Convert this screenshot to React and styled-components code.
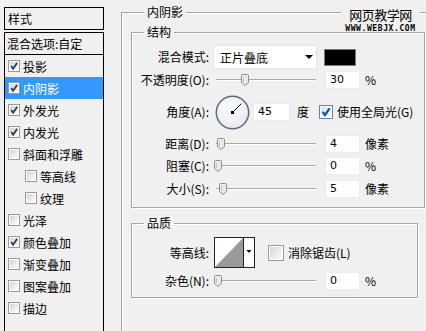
import React from 'react';
import styled, { createGlobalStyle } from 'styled-components';

const GlobalStyle = createGlobalStyle`
  html, body { margin: 0; padding: 0; background: #f0f0f0; overflow: hidden; }
  body {
    font-family: "Noto Sans CJK SC", "Liberation Sans", sans-serif;
    font-size: 12px;
    color: #000;
  }
  * { box-sizing: border-box; }
`;

const Page = styled.div`
  position: relative;
  width: 426px;
  height: 331px;
  display: flex;
  align-items: flex-start;
  overflow: hidden;
  background: #f0f0f0;
`;

/* ---------- left style list ---------- */
const Sidebar = styled.div`
  margin: 7px 0 0 4px;
  width: 100px;
  height: 330px;
  display: flex;
  flex-direction: column;
  flex-shrink: 0;
`;

const SideHeader = styled.div`
  height: 23px;
  border: 1px solid #000;
  padding: 2px 0 0 3px;
  line-height: 18px;
`;

const SideList = styled.div`
  margin-top: 2px;
  flex: 1;
  border: 1px solid #000;
  border-bottom: none;
  display: flex;
  flex-direction: column;
`;

const BlendRow = styled.div`
  height: 22px;
  border-bottom: 1px solid #000;
  padding-left: 2px;
  line-height: 21px;
  white-space: nowrap;
`;

const StyleRow = styled.div`
  height: 22px;
  display: flex;
  align-items: center;
  padding-left: ${p => (p.$indent ? 20 : 3)}px;
  background: ${p => (p.$active ? '#3399ff' : 'transparent')};
  color: ${p => (p.$active ? '#fff' : '#000')};
  white-space: nowrap;
`;

const BoxWrap = styled.span`
  display: inline-flex;
  width: ${p => p.$size}px;
  height: ${p => p.$size}px;
  flex-shrink: 0;
  margin-right: ${p => p.$gap}px;
`;

function CheckBox({ checked, size = 12, gap = 3, hover }) {
  const s = size;
  return (
    <BoxWrap $size={s} $gap={gap}>
      <svg width={s} height={s} viewBox={`0 0 ${s} ${s}`}>
        <defs>
          <linearGradient id={`cbg${s}${hover ? 'h' : ''}`} x1="0" y1="0" x2="1" y2="1">
            <stop offset="0" stopColor={hover ? '#cfe3f7' : '#d4d4d4'} />
            <stop offset="1" stopColor="#fdfdfd" />
          </linearGradient>
        </defs>
        <rect x="0.5" y="0.5" width={s - 1} height={s - 1} fill="#fff" stroke={hover ? '#5c86b8' : '#9a9a9a'} />
        <rect x="2" y="2" width={s - 4} height={s - 4} fill={`url(#cbg${s}${hover ? 'h' : ''})`} />
        {checked && (
          <path
            d={`M${s * 0.27} ${s * 0.5} L${s * 0.43} ${s * 0.72} L${s * 0.76} ${s * 0.24}`}
            fill="none"
            stroke={hover ? '#1f4f9a' : '#2b3e63'}
            strokeWidth={s > 13 ? 2.2 : 1.8}
          />
        )}
      </svg>
    </BoxWrap>
  );
}

/* ---------- right settings ---------- */
const Settings = styled.fieldset`
  margin: 4px 0 0 17px;
  padding: 0 0 0 9px;
  width: 330px;
  height: 340px;
  flex-shrink: 0;
  border: 1px solid #a5a5a5;
  box-shadow: inset 1px 1px 0 #fff;
  min-inline-size: auto;
`;

const GroupLegend = styled.legend`
  margin-left: ${p => p.$ml}px;
  padding: 0 3px;
  line-height: 16px;
  height: 16px;
`;

const Group = styled.fieldset`
  margin: ${p => p.$mt}px 0 0 0;
  padding: 0 0 ${p => p.$pb}px 0;
  width: ${p => p.$w}px;
  border: 1px solid #a5a5a5;
  box-shadow: inset 1px 1px 0 #fff, 1px 1px 0 #fff;
  display: flex;
  flex-direction: column;
  min-inline-size: auto;
`;

const FieldRow = styled.div`
  display: flex;
  align-items: center;
  height: ${p => p.$h}px;
  margin-top: ${p => p.$mt}px;
  white-space: nowrap;
`;

const FieldLabel = styled.span`
  width: 77px;
  margin-right: 4px;
  text-align: right;
  line-height: 16px;
`;

const Select = styled.div`
  width: 104px;
  height: 24px;
  background: #fff;
  border: 1px solid #e4e4e4;
  display: flex;
  align-items: center;
  justify-content: space-between;
  padding: 0 3px 0 6px;
`;

const Arrow = styled.span`
  width: 0;
  height: 0;
  border-left: 4px solid transparent;
  border-right: 4px solid transparent;
  border-top: 4px solid #000;
`;

const Swatch = styled.div`
  width: 32px;
  height: 17px;
  margin-left: 7px;
  background: #000;
  border: 1px solid #7a7a7a;
`;

const SliderBox = styled.div`
  position: relative;
  width: 104px;
  height: 18px;
  display: flex;
  align-items: center;
`;

const Track = styled.div`
  margin-left: 3px;
  width: 100px;
  height: 2px;
  border-top: 1px solid #a8a8a8;
  border-bottom: 1px solid #fff;
`;

const Thumb = styled.svg`
  position: absolute;
  top: 3px;
`;

function Slider({ pos }) {
  return (
    <SliderBox>
      <Track />
      <Thumb width="8" height="12" viewBox="0 0 8 12" style={{ left: pos }}>
        <path d="M1.5 0.5 H6.5 Q7.5 0.5 7.5 1.5 V8.5 L4 11.5 L0.5 8.5 V1.5 Q0.5 0.5 1.5 0.5 Z" fill="#eaeaea" stroke="#8d8d8d" />
        <path d="M2.5 3 V8" stroke="#c4c4c4" />
      </Thumb>
    </SliderBox>
  );
}

const NumBox = styled.div`
  width: ${p => p.$w || 35}px;
  height: 18px;
  margin-left: ${p => p.$ml}px;
  background: #fff;
  border: 1px solid #ececec;
  padding-left: 4px;
  font-family: "DejaVu Sans", "Liberation Sans", sans-serif;
  font-size: 11px;
  line-height: 16px;
`;

const Unit = styled.span`
  margin-left: ${p => p.$ml}px;
  line-height: 16px;
`;

const DialWrap = styled.span`
  display: inline-flex;
  margin-left: 2px;
`;

function Dial() {
  const a = (45 * Math.PI) / 180;
  return (
    <DialWrap>
      <svg width="35" height="35" viewBox="0 0 35 35">
        <defs>
          <radialGradient id="dialg" cx="0.45" cy="0.4" r="0.6">
            <stop offset="0" stopColor="#ffffff" />
            <stop offset="1" stopColor="#e6e9ee" />
          </radialGradient>
        </defs>
        <circle cx="17.5" cy="17.5" r="16.2" fill="url(#dialg)" stroke="#5e6c7c" strokeWidth="1.5" />
        <line x1="17.5" y1="17.5" x2={17.5 + 12.5 * Math.cos(a)} y2={17.5 - 12.5 * Math.sin(a)} stroke="#000" strokeWidth="1" />
        <rect x="16" y="16" width="3" height="3" fill="#000" />
      </svg>
    </DialWrap>
  );
}

const CheckLabel = styled.span`
  display: inline-flex;
  align-items: center;
  margin-left: ${p => p.$ml}px;
  line-height: 16px;
`;

const ContourWrap = styled.span`
  display: inline-flex;
  margin-left: 1px;
`;

function Contour() {
  return (
    <ContourWrap>
      <svg width="41" height="31" viewBox="0 0 41 31">
        <rect x="0.5" y="0.5" width="40" height="30" fill="#fff" stroke="#222" />
        <polygon points="1,30 29,1 29,30" fill="#9a9a9a" />
        <line x1="29.5" y1="1" x2="29.5" y2="30" stroke="#222" />
        <polygon points="32.5,13 37.5,13 35,16" fill="#000" />
      </svg>
    </ContourWrap>
  );
}

const Watermark = styled.div`
  position: absolute;
  left: 341px;
  top: 3px;
  width: 79px;
  height: 27px;
  background: #f0f0f0;
  display: flex;
  flex-direction: column;
  align-items: center;
`;

const MarkTitle = styled.div`
  font-size: 13px;
  line-height: 17px;
  margin-top: 3px;
  letter-spacing: -0.5px;
`;

const MarkUrl = styled.div`
  font-family: "DejaVu Sans Mono", monospace;
  font-weight: bold;
  font-size: 8px;
  line-height: 8px;
  letter-spacing: 0.6px;
  margin-top: 2px;
`;

const styleItems = [
  { label: '投影', checked: true },
  { label: '内阴影', checked: true, active: true },
  { label: '外发光', checked: true },
  { label: '内发光', checked: true },
  { label: '斜面和浮雕' },
  { label: '等高线', indent: true },
  { label: '纹理', indent: true },
  { label: '光泽' },
  { label: '颜色叠加', checked: true },
  { label: '渐变叠加' },
  { label: '图案叠加' },
  { label: '描边' },
];

export default function App() {
  return (
    <>
      <GlobalStyle />
      <Page>
        <Sidebar>
          <SideHeader>样式</SideHeader>
          <SideList>
            <BlendRow>混合选项:自定</BlendRow>
            {styleItems.map(it => (
              <StyleRow key={it.label} $indent={it.indent} $active={it.active}>
                <CheckBox checked={it.checked} />
                {it.label}
              </StyleRow>
            ))}
          </SideList>
        </Sidebar>

        <Settings>
          <GroupLegend $ml={13}>内阴影</GroupLegend>
          <Group $mt={4} $w={294} $pb={9}>
            <GroupLegend $ml={12}>结构</GroupLegend>
            <FieldRow $h={24} $mt={5}>
              <FieldLabel>混合模式:</FieldLabel>
              <Select>
                正片叠底
                <Arrow />
              </Select>
              <Swatch />
            </FieldRow>
            <FieldRow $h={18} $mt={2}>
              <FieldLabel>不透明度(O):</FieldLabel>
              <Slider pos={28} />
              <NumBox $ml={8}>30</NumBox>
              <Unit $ml={5}>%</Unit>
            </FieldRow>
            <FieldRow $h={34} $mt={6}>
              <FieldLabel>角度(A):</FieldLabel>
              <Dial />
              <NumBox $ml={3} $w={37}>45</NumBox>
              <Unit $ml={7}>度</Unit>
              <CheckLabel $ml={10}>
                <CheckBox checked size={14} gap={4} hover />
                使用全局光(G)
              </CheckLabel>
            </FieldRow>
            <FieldRow $h={18} $mt={6}>
              <FieldLabel>距离(D):</FieldLabel>
              <Slider pos={4} />
              <NumBox $ml={8}>4</NumBox>
              <Unit $ml={5}>像素</Unit>
            </FieldRow>
            <FieldRow $h={18} $mt={4}>
              <FieldLabel>阻塞(C):</FieldLabel>
              <Slider pos={1} />
              <NumBox $ml={8}>0</NumBox>
              <Unit $ml={5}>%</Unit>
            </FieldRow>
            <FieldRow $h={18} $mt={5}>
              <FieldLabel>大小(S):</FieldLabel>
              <Slider pos={6} />
              <NumBox $ml={8}>5</NumBox>
              <Unit $ml={5}>像素</Unit>
            </FieldRow>
          </Group>

          <Group $mt={7} $w={287} $pb={7}>
            <GroupLegend $ml={12}>品质</GroupLegend>
            <FieldRow $h={31} $mt={6}>
              <FieldLabel>等高线:</FieldLabel>
              <Contour />
              <CheckLabel $ml={13}>
                <CheckBox size={16} gap={4} />
                消除锯齿(L)
              </CheckLabel>
            </FieldRow>
            <FieldRow $h={18} $mt={4}>
              <FieldLabel>杂色(N):</FieldLabel>
              <Slider pos={1} />
              <NumBox $ml={8}>0</NumBox>
              <Unit $ml={5}>%</Unit>
            </FieldRow>
          </Group>
        </Settings>

        <Watermark>
          <MarkTitle>网页教学网</MarkTitle>
          <MarkUrl>WWW.WEBJX.COM</MarkUrl>
        </Watermark>
      </Page>
    </>
  );
}
